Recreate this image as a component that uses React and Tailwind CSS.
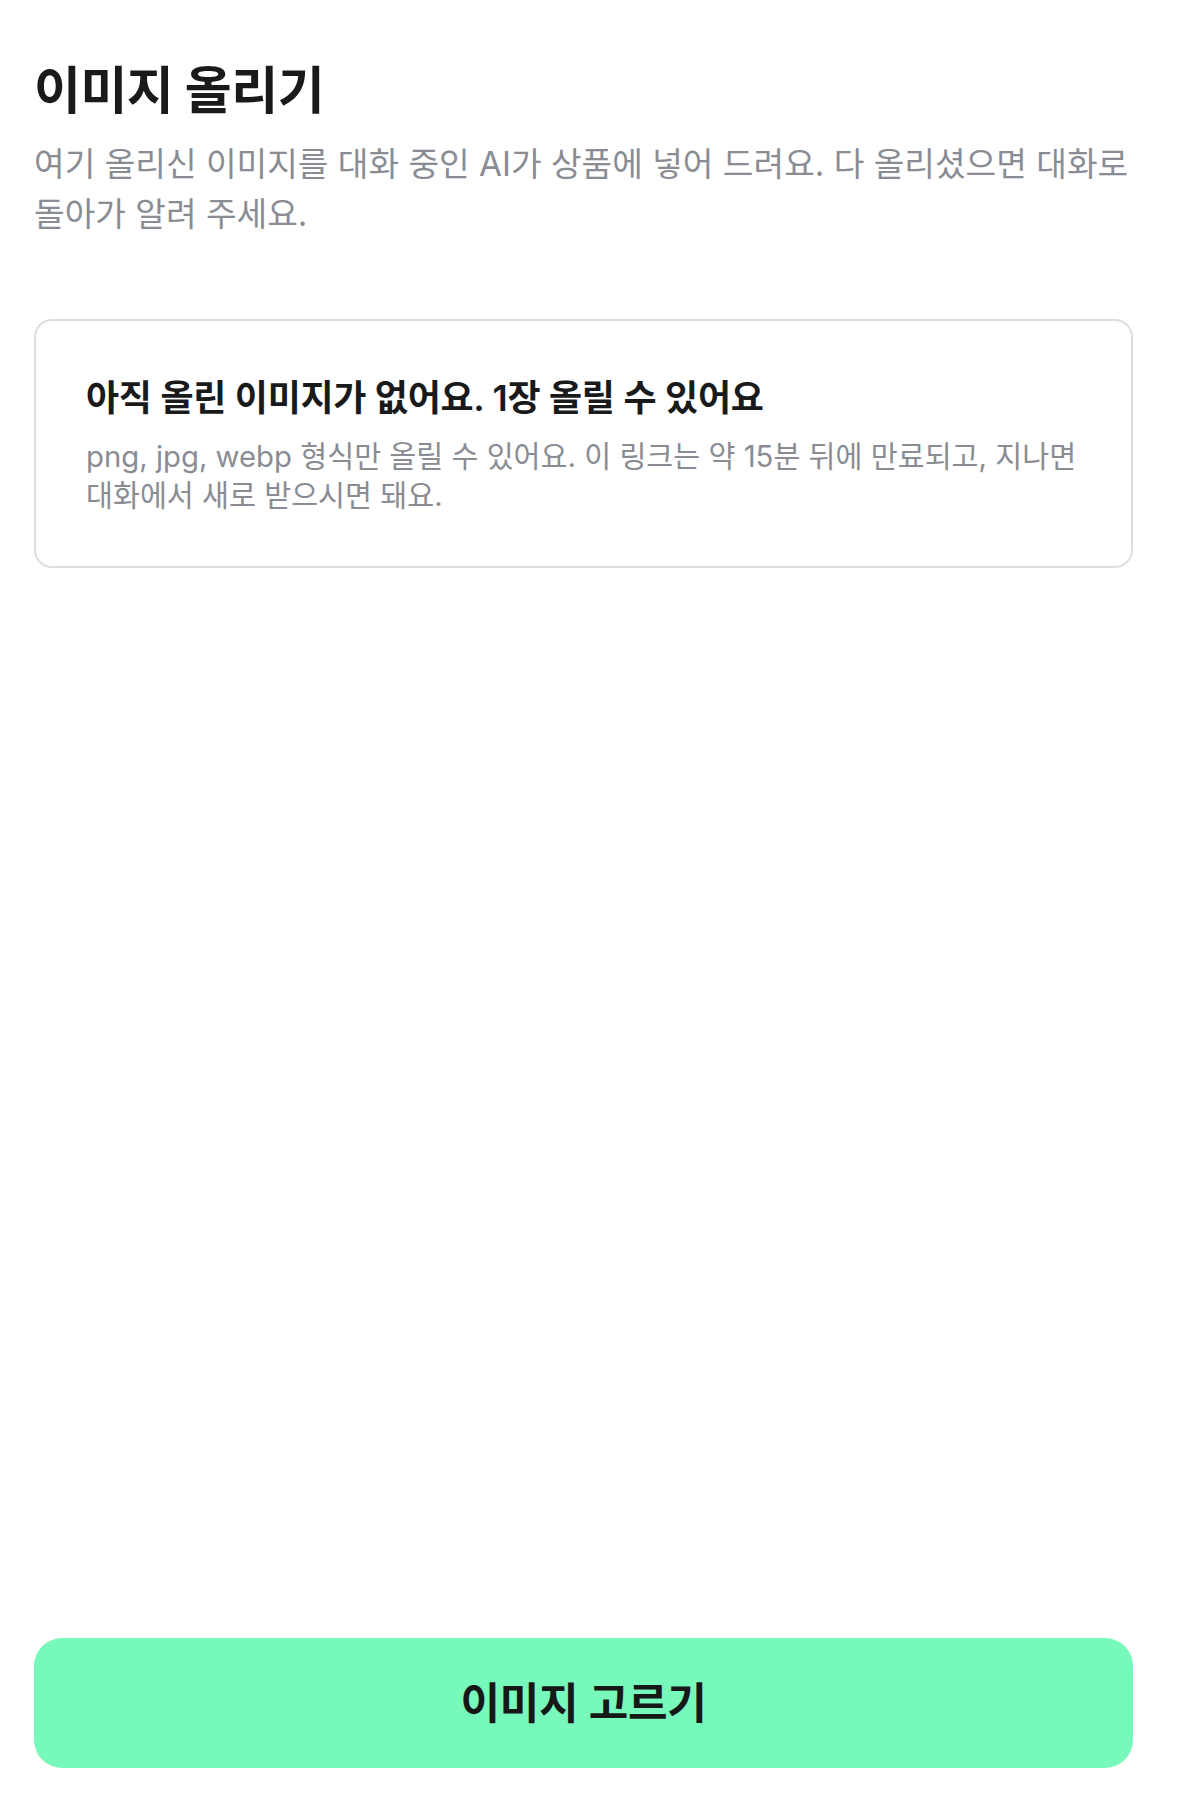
export default function App() {
	return (
		<div
			className="min-h-[1798px] w-full bg-white flex flex-col pl-[34px] pr-[51px] pt-[60px] pb-[30px] break-keep"
			style={{ fontFamily: 'Inter, "Noto Sans CJK KR", sans-serif' }}
		>
			<h1 className="text-[51px] leading-[62px] font-bold tracking-[-0.5px] text-[#191a1c]">
				이미지 올리기
			</h1>
			<p className="mt-[17px] text-[33.3px] leading-[50px] text-[#8a8c93]">
				여기 올리신 이미지를 대화 중인 AI가 상품에 넣어 드려요. 다 올리셨으면 대화로
				돌아가 알려 주세요.
			</p>
			<div className="mt-[80px] rounded-[18px] border-2 border-[#dedee2] px-[50px] pt-[53px] pb-[51px]">
				<h2 className="text-[36px] leading-[48px] font-semibold tracking-[-0.3px] text-[#191a1c]">
					아직 올린 이미지가 없어요. 1장 올릴 수 있어요
				</h2>
				<p className="mt-[15px] text-[29.3px] leading-[39px] text-[#8a8c93]">
					png, jpg, webp 형식만 올릴 수 있어요. 이 링크는 약 15분 뒤에 만료되고, 지나면
					대화에서 새로 받으시면 돼요.
				</p>
			</div>
			<div className="flex-1" />
			<button className="h-[130px] w-full rounded-[28px] bg-[#78f9bc] text-[43px] font-semibold text-[#161817] tracking-[-0.3px]">
				이미지 고르기
			</button>
		</div>
	);
}
